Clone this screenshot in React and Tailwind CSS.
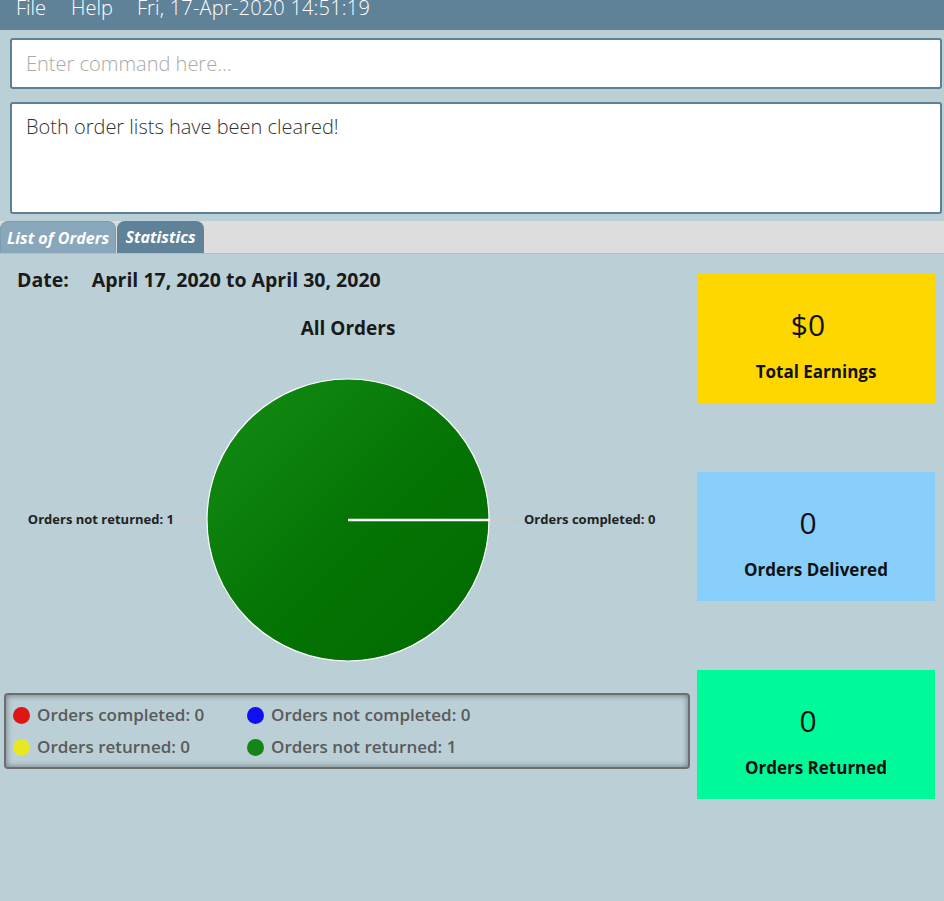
import React from "react";

const font = { fontFamily: '"Open Sans", "Noto Sans", sans-serif' };

function Card({ bg, value, label }) {
  return (
    <div className={`h-[129px] w-[238px] flex flex-col items-center ${bg}`}>
      <div className="mt-[33px] mr-[16px] h-[36px] text-[30px] leading-[36px] text-[#111]">{value}</div>
      <div className="mt-[17px] text-[17px] font-bold leading-[24px] text-[#111]">{label}</div>
    </div>
  );
}

function Dot({ color }) {
  return <span className={`inline-block h-[17px] w-[17px] rounded-full ${color}`} />;
}

export default function App() {
  return (
    <div className="w-[944px] h-[901px] bg-[#bbcfd6] flex flex-col overflow-hidden" style={font}>
      <div className="h-[30px] bg-[#5f8299] flex items-start pl-[16px] text-white text-[20px] font-light leading-[16px]">
        <span>File</span>
        <span className="ml-[25px]">Help</span>
        <span className="ml-[24px] tracking-[0.2px]">Fri, 17-Apr-2020 14:51:19</span>
      </div>
      <div className="mt-[8px] mx-[10px] mr-[2px] h-[51px] bg-white border-2 border-[#5e7f96] rounded-[3px] flex items-center pl-[14px] text-[20px] font-light text-[#a9a9a9]">
        Enter command here...
      </div>
      <div className="mt-[13px] mx-[10px] mr-[2px] h-[112px] bg-white border-2 border-[#5e7f96] rounded-[3px] pl-[14px] pt-[9px] text-[20px] font-light text-[#333] leading-[28px]">
        Both order lists have been cleared!
      </div>
      <div className="mt-[7px] h-[33px] bg-[#dddddd] border-b border-[#bcbcbc] flex items-end">
        <div className="h-[32px] w-[116px] bg-[#88a7bb] rounded-t-[8px] border border-b-0 border-[#7e9cb0] flex items-center justify-center text-white text-[16px] font-bold italic">
          List of Orders
        </div>
        <div className="ml-[1px] h-[32px] w-[87px] bg-[#5f8299] rounded-t-[8px] flex items-center justify-center text-white text-[16px] font-bold italic">
          Statistics
        </div>
      </div>
      <div className="flex flex-1">
        <div className="w-[696px] flex flex-col">
          <div className="mt-[14px] h-[24px] flex items-center text-[19.5px] font-bold text-[#1a1a1a] leading-[24px]">
            <span className="ml-[17px]">Date:</span>
            <span className="ml-[23px]">April 17, 2020 to April 30, 2020</span>
          </div>
          <div className="mt-[24px] text-center text-[19px] font-bold text-[#1a1a1a] leading-[24px]">All Orders</div>
          <div className="mt-[38px] h-[284px] flex items-center">
            <div className="flex-1 flex items-center justify-end">
              <span className="text-[13px] font-bold text-[#222]">Orders not returned: 1</span>
              <span className="ml-[5px] h-[6px] w-[6px] rounded-full border border-[#c8c8c8]" />
              <span className="h-px w-[21px] bg-[#c8c8c8]" />
            </div>
            <svg width="284" height="284" viewBox="0 0 284 284">
              <defs>
                <linearGradient id="g" x1="0" y1="0" x2="1" y2="1">
                  <stop offset="0" stopColor="#148d14" />
                  <stop offset="0.55" stopColor="#047404" />
                  <stop offset="1" stopColor="#006a00" />
                </linearGradient>
              </defs>
              <circle cx="142" cy="142" r="141" fill="url(#g)" stroke="#ffffff" strokeWidth="1.2" />
              <line x1="142" y1="142" x2="283" y2="142" stroke="#ffffff" strokeWidth="2.5" />
            </svg>
            <div className="flex-1 flex items-center">
              <span className="h-px w-[24px] bg-[#c8c8c8]" />
              <span className="h-[6px] w-[6px] rounded-full border border-[#c8c8c8]" />
              <span className="ml-[4px] text-[13px] font-bold text-[#222]">Orders completed: 0</span>
            </div>
          </div>
          <div className="mt-[31px] ml-[4px] w-[686px] h-[76px] rounded-[4px] border-2 border-[#6d6d6d] shadow-[inset_0_0_6px_rgba(0,0,0,0.45)] grid grid-cols-[234px_1fr] content-center gap-y-[10px] pl-[7px] text-[17px] font-semibold text-[#5a5a5a] leading-[22px]">
            <div className="flex items-center gap-[7px]"><Dot color="bg-[#e01515]" />Orders completed: 0</div>
            <div className="flex items-center gap-[7px]"><Dot color="bg-[#1010f0]" />Orders not completed: 0</div>
            <div className="flex items-center gap-[7px]"><Dot color="bg-[#e8e820]" />Orders returned: 0</div>
            <div className="flex items-center gap-[7px]"><Dot color="bg-[#158515]" />Orders not returned: 1</div>
          </div>
        </div>
        <div className="ml-[1px] pt-[20px] flex flex-col gap-[69px]">
          <Card bg="bg-[#ffd700]" value="$0" label="Total Earnings" />
          <Card bg="bg-[#87cefa]" value="0" label="Orders Delivered" />
          <Card bg="bg-[#00fa9a]" value="0" label="Orders Returned" />
        </div>
      </div>
    </div>
  );
}
